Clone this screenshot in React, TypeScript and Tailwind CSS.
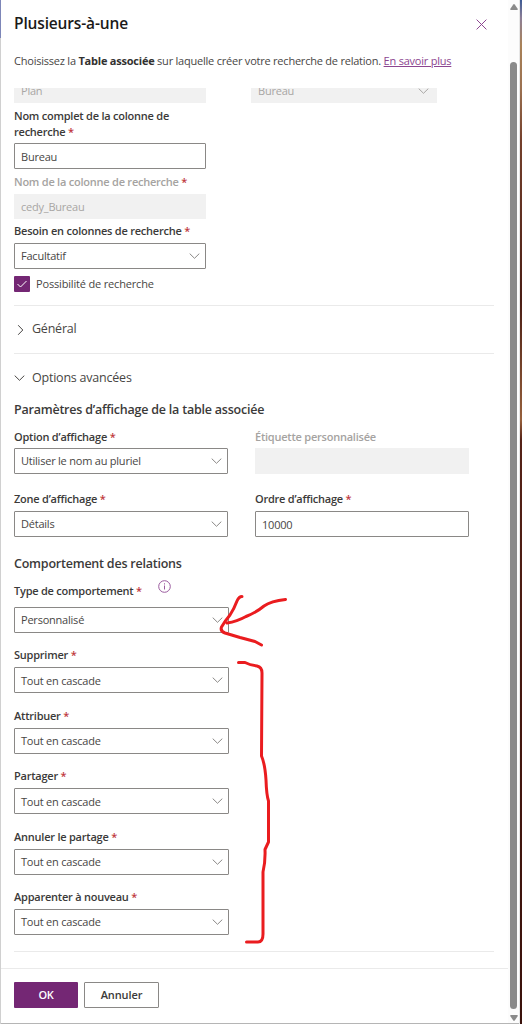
import { useState } from "react";

const behaviors = [
  { id: "delete", label: "Supprimer" },
  { id: "assign", label: "Attribuer" },
  { id: "share", label: "Partager" },
  { id: "unshare", label: "Annuler le partage" },
  { id: "reparent", label: "Apparenter à nouveau" },
];

function Chevron({ className = "" }: { className?: string }) {
  return (
    <svg
      className={`h-[6px] w-[11px] shrink-0 ${className}`}
      viewBox="0 0 11 6"
      fill="none"
      stroke="currentColor"
    >
      <path d="M0.7 0.6L5.5 5.3L10.3 0.6" />
    </svg>
  );
}

function Label({
  text,
  required = true,
  disabled = false,
}: {
  text: string;
  required?: boolean;
  disabled?: boolean;
}) {
  return (
    <span
      className={`font-semibold tracking-[-0.23px] ${
        disabled ? "text-[#a5a3a1]" : "text-[#3b3a39]"
      }`}
    >
      {text}
      {required && <span className="text-[#c0383d]"> *</span>}
    </span>
  );
}

function Select({ value }: { value: string }) {
  return (
    <div className="flex h-[26px] items-center justify-between rounded-[1px] border border-[#8a8886] bg-white pr-[5px] pl-[6px]">
      <span className="pt-px">{value}</span>
      <Chevron className="text-[#8a8886]" />
    </div>
  );
}

function Input({ value }: { value: string }) {
  return (
    <input
      type="text"
      readOnly
      value={value}
      className="block h-[26px] w-full rounded-[1px] border border-[#8a8886] bg-white px-[6px] outline-none"
    />
  );
}

function App() {
  const [searchable, setSearchable] = useState(true);

  return (
    <div className="relative flex h-[1024px] w-[522px] overflow-hidden bg-white font-['Open_Sans','Noto_Sans',sans-serif] text-[11px] tracking-[-0.22px] text-[#484644]">
      {/* Page edge behind the panel */}
      <div className="flex w-px flex-col">
        <div className="h-[38px] bg-[#7d86b8]" />
        <div className="flex-1 bg-[#d0d0d0]" />
      </div>

      <div className="flex w-[507px] flex-col border-b border-[#b5b5b5]">
        <header className="h-[88px] pr-[21px] pl-[13px]">
          <div className="flex h-[47px] items-center justify-between">
            <h1 className="text-[15.5px] font-semibold tracking-[-0.15px] text-[#1b1a19]">
              Plusieurs-à-une
            </h1>
            <svg
              className="mt-px h-[11px] w-[11px]"
              viewBox="0 0 11 11"
              fill="none"
              stroke="#8c4590"
            >
              <path d="M0.6 0.6L10.4 10.4M10.4 0.6L0.6 10.4" />
            </svg>
          </div>
          <p className="flex h-[29px] items-center whitespace-pre">
            Choisissez la{" "}
            <b className="font-bold text-[#323130]">Table associée</b> sur
            laquelle créer votre recherche de relation.{" "}
            <a className="text-[#8c4590] underline">En savoir plus</a>
          </p>
        </header>

        <main className="h-[880px] pl-[13px]">
          {/* Fields partly scrolled under the header */}
          <div className="flex h-[15px] items-end gap-[45px] overflow-hidden text-[#a8a6a4]">
            <div className="flex h-[26px] w-[192px] shrink-0 items-center bg-[#f1f1f1] px-[7px] pt-[2px]">
              Plan
            </div>
            <div className="flex h-[26px] w-[186px] shrink-0 items-center justify-between bg-[#f1f1f1] pt-[2px] pr-[8px] pl-[7px]">
              <span>Bureau</span>
              <Chevron />
            </div>
          </div>

          <div className="w-[192px]">
            <div className="h-[40px] pt-[5px] leading-[16px]">
              <Label text="Nom complet de la colonne de recherche" />
            </div>
            <Input value="Bureau" />
            <div className="flex h-[25px] items-center pt-px">
              <Label text="Nom de la colonne de recherche" disabled />
            </div>
            <div className="flex h-[25px] items-center bg-[#f1f1f1] px-[7px] pt-[2px] text-[#a8a6a4]">
              cedy_Bureau
            </div>
            <div className="flex h-[24px] items-center pt-px">
              <Label text="Besoin en colonnes de recherche" />
            </div>
            <Select value="Facultatif" />
            <button
              className="mt-[7px] flex h-4 items-center gap-[6px] tracking-[-0.17px]"
              onClick={() => setSearchable(!searchable)}
            >
              <span className="flex h-4 w-4 items-center justify-center rounded-[1px] bg-[#742774]">
                {searchable && (
                  <svg
                    className="h-[8px] w-[10px]"
                    viewBox="0 0 10 8"
                    fill="none"
                    stroke="#fff"
                  >
                    <path d="M0.5 4L3.5 7L9.5 1" />
                  </svg>
                )}
              </span>
              Possibilité de recherche
            </button>
          </div>

          <section className="mt-[13px] flex h-[48px] w-[480px] items-center gap-[6px] border-t border-[#eaeaea] text-[12.5px]">
            <Chevron className="ml-px -rotate-90" />
            <span>Général</span>
          </section>

          <section className="w-[480px] border-t border-b border-[#eaeaea]">
            <div className="flex h-[48px] items-center gap-[7px] text-[12.5px]">
              <Chevron />
              <span>Options avancées</span>
            </div>
            <h2 className="flex h-[17px] items-center text-[12.5px] font-semibold text-[#3b3a39]">
              Paramètres d’affichage de la table associée
            </h2>
            <div className="grid grid-cols-[214px_214px] gap-x-[27px]">
              <div>
                <div className="flex h-[29px] items-end pb-[3px]">
                  <Label text="Option d’affichage" />
                </div>
                <Select value="Utiliser le nom au pluriel" />
              </div>
              <div>
                <div className="flex h-[29px] items-end pb-[3px]">
                  <Label text="Étiquette personnalisée" required={false} disabled />
                </div>
                <div className="h-[26px] bg-[#f1f1f1]" />
              </div>
              <div>
                <div className="flex h-[37px] items-end pb-[4px]">
                  <Label text="Zone d’affichage" />
                </div>
                <Select value="Détails" />
              </div>
              <div>
                <div className="flex h-[37px] items-end pb-[4px]">
                  <Label text="Ordre d’affichage" />
                </div>
                <Input value="10000" />
              </div>
            </div>

            <h2 className="mt-[18px] flex h-[18px] items-center text-[12.5px] font-semibold text-[#3b3a39]">
              Comportement des relations
            </h2>
            <div className="w-[215px]">
              <div className="flex h-[34px] items-start">
                <div className="pt-[10px]">
                  <Label text="Type de comportement" />
                </div>
                <svg
                  className="mt-[7px] ml-[16px] h-[13px] w-[13px]"
                  viewBox="0 0 13 13"
                  fill="none"
                  stroke="#9a5a9e"
                >
                  <circle cx="6.5" cy="6.5" r="5.8" />
                  <path d="M6.5 5.5V9.5M6.5 3.3V4.5" />
                </svg>
              </div>
              <Select value="Personnalisé" />
              {behaviors.map((behavior) => (
                <div key={behavior.id}>
                  <div className="flex h-[34.45px] items-end pb-[3.5px]">
                    <Label text={behavior.label} />
                  </div>
                  <Select value="Tout en cascade" />
                </div>
              ))}
            </div>
            <div className="h-[16px]" />
          </section>
        </main>

        <footer className="flex flex-1 items-start gap-[6px] border-t border-[#eaeaea] pt-[13px] pl-[13px]">
          <button className="h-[26px] w-[64px] rounded-[1px] bg-[#742774] font-semibold text-white">
            OK
          </button>
          <button className="h-[26px] w-[75px] rounded-[1px] border border-[#8a8886] bg-white font-semibold tracking-[-0.1px] text-[#3b3a39]">
            Annuler
          </button>
        </footer>
      </div>

      {/* Scrollbar */}
      <div className="flex w-[11px] flex-col items-center border-b border-[#b5b5b5] bg-[#fcfcfc]">
        <svg className="mt-[4px] h-[6px] w-[8px]" viewBox="0 0 8 6" fill="#8a8a8a">
          <path d="M3.3 0.4Q4 -0.3 4.7 0.4L7.8 5Q8 6 7 6H1Q0 6 0.2 5Z" />
        </svg>
        <div className="mt-[52px] h-[947px] w-[7px] rounded-full bg-[#8a8a8a]" />
        <svg className="mt-[6px] h-[6px] w-[8px]" viewBox="0 0 8 6" fill="#8a8a8a">
          <path d="M3.3 5.6Q4 6.3 4.7 5.6L7.8 1Q8 0 7 0H1Q0 0 0.2 1Z" />
        </svg>
      </div>
      <div className="w-px bg-[#e6e6e6]" />
      <div className="w-[2px] bg-[linear-gradient(#3d5a94_0px,#8d7f96_18px,#a98258_45px,#9a7050_90px,#74402c_140px,#4a1d14_300px,#96603c_420px,#552217_440px,#45170f_700px,#3a120c_1024px)]" />

      {/* Hand-drawn annotation */}
      <svg
        className="pointer-events-none absolute inset-0 h-[1024px] w-[522px]"
        viewBox="0 0 522 1024"
        fill="none"
        stroke="#ea1c1f"
        strokeWidth="3"
        strokeLinecap="round"
        strokeLinejoin="round"
      >
        <path d="M242 596.5Q239 596.5 237 601Q234 609 230 615Q225 621 221.500 627Q220 631 225 633L240 637.500L255 641.500L261.500 645" />
        <path d="M227 623Q237 621.500 246 616.500Q257 612 264 606Q271 601 285.500 599.500" />
        <path d="M238.500 662.500H245Q250 665 257 666Q262 667 262 673L261.500 756Q265 764 266 780Q266.500 795 268.500 801V842L265 849.500Q265.500 862 263 872V934Q263 942 258 942H246.500" />
      </svg>
    </div>
  );
}

export default App;
